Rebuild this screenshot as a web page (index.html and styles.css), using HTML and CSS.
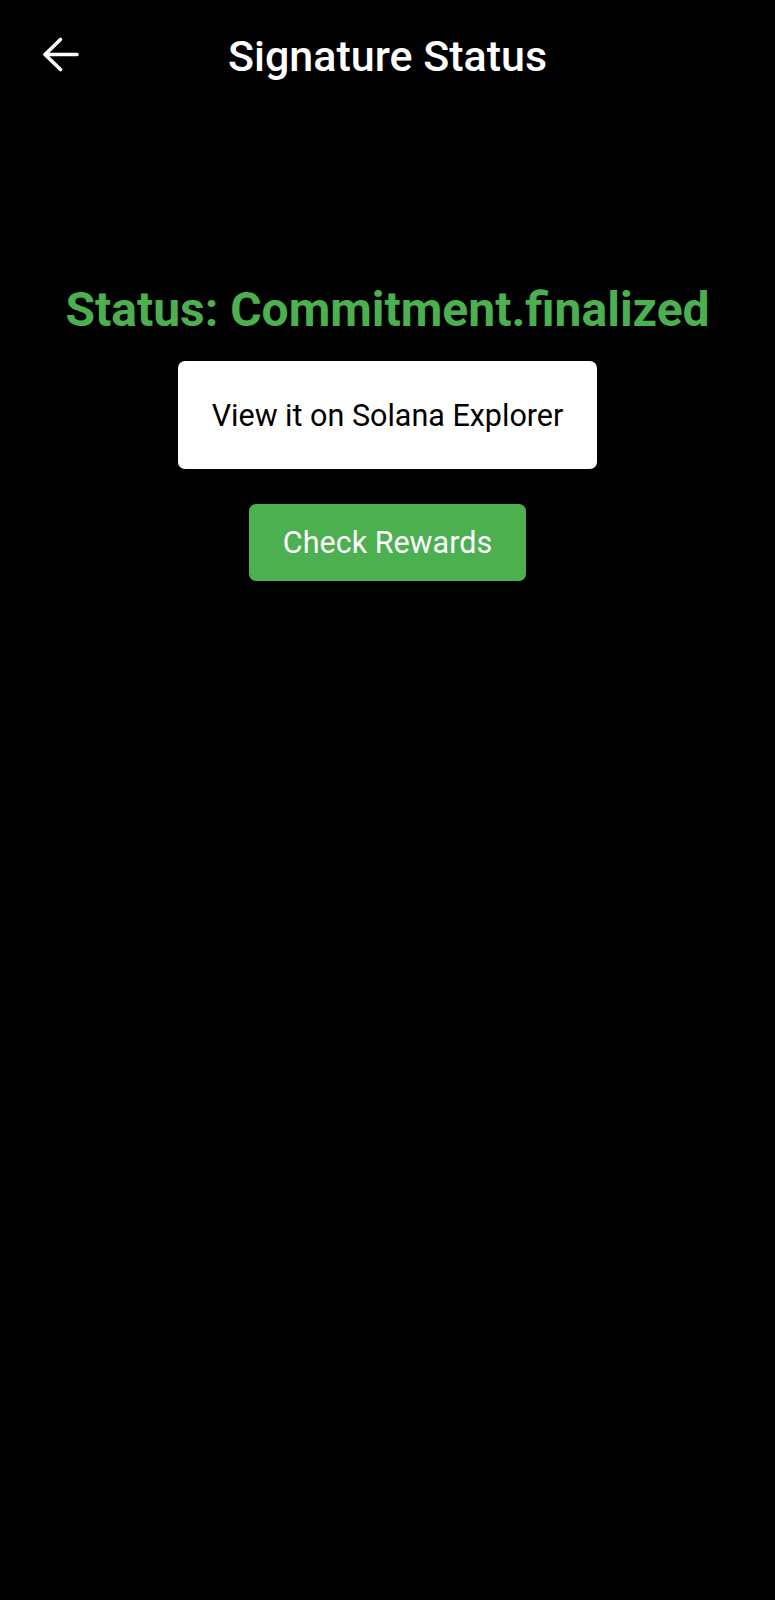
FILE: index.html
```html
<!DOCTYPE html>
<html>
<head>
<meta charset="utf-8">
<link rel="stylesheet" href="styles.css">
</head>
<body>
<div class="app">
  <header class="appbar">
    <button class="back" aria-label="Back">
      <svg viewBox="0 0 40 40"><path d="M5 19.5H37M20.5 4.5L5 19.5L20.5 34.5" fill="none" stroke="#fff" stroke-width="3.6" stroke-linecap="round" stroke-linejoin="round"/></svg>
    </button>
    <h1 class="title">Signature Status</h1>
  </header>
  <main class="content">
    <div class="status">Status: Commitment.finalized</div>
    <button class="btn btn-white">View it on Solana Explorer</button>
    <button class="btn btn-green">Check Rewards</button>
  </main>
</div>
</body>
</html>
```
FILE: styles.css
```css
html, body {
  margin: 0;
  padding: 0;
  background: #000;
}
body {
  font-family: Roboto, "Noto Sans", sans-serif;
  color: #fff;
}
.app {
  width: 775px;
  min-height: 1600px;
  background: #000;
}
.appbar {
  position: relative;
  height: 112px;
  display: flex;
  align-items: center;
  justify-content: center;
}
.back {
  position: absolute;
  left: 40px;
  top: 35px;
  background: none;
  border: none;
  padding: 0;
  width: 40px;
  height: 40px;
  display: block;
}
.back svg {
  display: block;
  width: 40px;
  height: 40px;
}
.title {
  margin: 0;
  font-weight: 500;
  font-size: 43px;
  line-height: 1;
  color: #fff;
}
.content {
  display: flex;
  flex-direction: column;
  align-items: center;
  padding-top: 166px;
}
.status {
  color: #4caf50;
  font-weight: 700;
  font-size: 48px;
  line-height: 64px;
}
.btn {
  font-family: Roboto, "Noto Sans", sans-serif;
  border: none;
  border-radius: 7px;
  font-size: 30.5px;
  font-weight: 400;
  cursor: pointer;
}
.btn-white {
  margin-top: 19px;
  background: #fff;
  color: #000;
  width: 419px;
  height: 108px;
}
.btn-green {
  margin-top: 35px;
  background: #4caf50;
  color: #fff;
  width: 277px;
  height: 77px;
}
```
